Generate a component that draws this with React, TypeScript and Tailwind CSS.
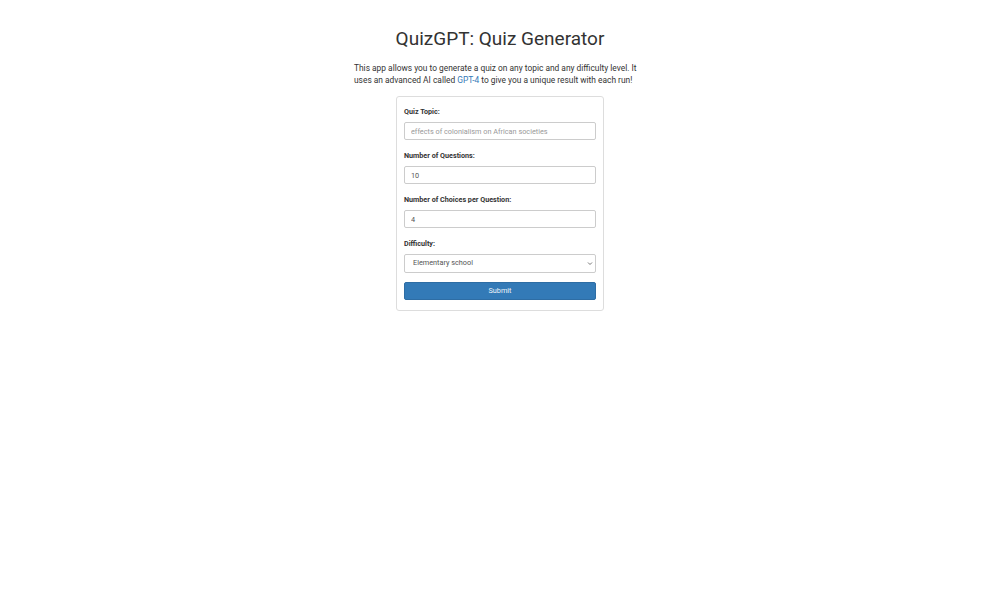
import React from "react";

const font = { fontFamily: "Roboto, 'Liberation Sans', sans-serif" };

function Field({ label, children }: { label: string; children: React.ReactNode }) {
  return (
    <div className="flex flex-col">
      <label className="text-[7.2px] leading-[10px] font-bold text-[#333] mb-[5px]">{label}</label>
      {children}
    </div>
  );
}

export default function App() {
  return (
    <div className="min-h-screen bg-white text-[#333]" style={font}>
      <div className="flex flex-col items-center pt-[26px]">
        <h1 className="text-[19px] leading-[26px] font-normal text-[#333]">QuizGPT: Quiz Generator</h1>
        <p className="mt-[10px] w-[292px] text-left text-[8.4px] leading-[12px]">
          This app allows you to generate a quiz on any topic and any difficulty level. It uses an advanced AI called{" "}
          <a href="#" className="text-[#337ab7]">GPT-4</a> to give you a unique result with each run!
        </p>

        <form
          className="mt-[10px] w-[208px] border border-[#ddd] rounded-[3px] px-[7px] pt-[10px] pb-[10px] flex flex-col gap-[11px]"
          onSubmit={(e) => e.preventDefault()}
        >
          <Field label="Quiz Topic:">
            <input
              placeholder="effects of colonialism on African societies"
              className="h-[18px] border border-[#ccc] rounded-[2px] px-[6px] text-[7.3px] text-[#555] placeholder:text-[#999] outline-none"
            />
          </Field>
          <Field label="Number of Questions:">
            <input
              defaultValue="10"
              className="h-[18px] border border-[#ccc] rounded-[2px] px-[6px] text-[7.3px] text-[#555] outline-none"
            />
          </Field>
          <Field label="Number of Choices per Question:">
            <input
              defaultValue="4"
              className="h-[18px] border border-[#ccc] rounded-[2px] px-[6px] text-[7.3px] text-[#555] outline-none"
            />
          </Field>
          <Field label="Difficulty:">
            <div className="relative">
              <select
                defaultValue="Elementary school"
                className="block w-full h-[19px] appearance-none border border-[#ccc] rounded-[2px] pl-[8px] pr-[14px] text-[7.3px] text-[#555] bg-white outline-none"
              >
                <option>Elementary school</option>
                <option>Middle school</option>
                <option>High school</option>
                <option>College</option>
              </select>
              <svg
                className="absolute right-[3px] top-[7px] pointer-events-none"
                width="6"
                height="5"
                viewBox="0 0 6 5"
                fill="none"
              >
                <path d="M1 1.5 L3 3.5 L5 1.5" stroke="#777" strokeWidth="1" />
              </svg>
            </div>
          </Field>
          <button
            type="submit"
            className="-mt-[2px] h-[18px] rounded-[2px] bg-[#337ab7] border border-[#2e6da4] text-[#eef4fa] text-[7.3px]"
          >
            Submit
          </button>
        </form>
      </div>
    </div>
  );
}
